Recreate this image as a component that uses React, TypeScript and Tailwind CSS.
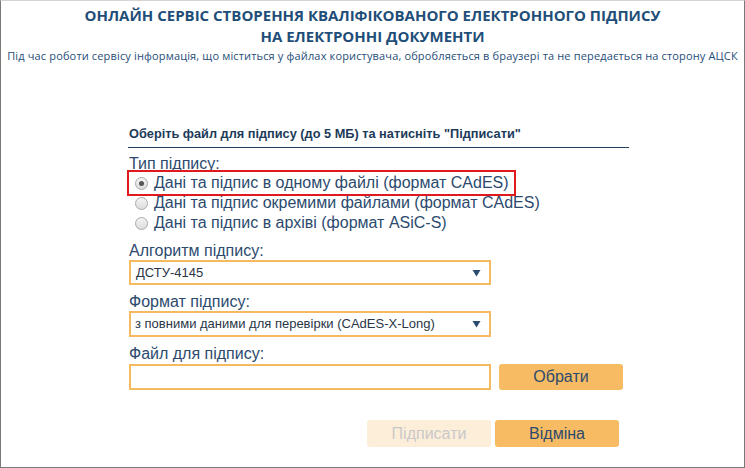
import React from "react";

const Radio = ({ checked }: { checked?: boolean }) => (
  <span className="w-[13px] h-[13px] rounded-full border border-[#a9a9a9] bg-gradient-to-b from-[#f4f4f4] to-[#dcdcdc] flex items-center justify-center shrink-0">
    {checked && <span className="w-[5px] h-[5px] rounded-full bg-[#555]" />}
  </span>
);

const Arrow = () => (
  <svg width="9" height="8" viewBox="0 0 9 8" className="absolute right-[8px] top-1/2 -translate-y-1/2">
    <path d="M0.5 1 L8.5 1 L4.5 7.5 Z" fill="#2b4c70" />
  </svg>
);

export default function App() {
  return (
    <div className="w-[745px] h-[468px] bg-white border border-[#7a7a7a] border-t-[#d4d4d4] relative overflow-hidden [font-family:'Liberation_Sans',Arial,sans-serif]">
      <div className="pt-[4px] text-center [font-family:'Open_Sans',sans-serif] font-bold text-[15px] leading-[21px] text-[#1f4e79]">
        <div>ОНЛАЙН СЕРВІС СТВОРЕННЯ КВАЛІФІКОВАНОГО ЕЛЕКТРОННОГО ПІДПИСУ</div>
        <div>НА ЕЛЕКТРОННІ ДОКУМЕНТИ</div>
      </div>
      <div className="text-center whitespace-nowrap [font-family:'Open_Sans',sans-serif] text-[11px] leading-[17px] text-[#1f4e79] tracking-[0.15px]">
        Під час роботи сервісу інформація, що міститься у файлах користувача, обробляється в браузері та не передається на сторону АЦСК
      </div>

      <div className="ml-[127px] w-[501px] mt-[63px] text-[#2c4a6e]">
        <div className="pl-[1px] text-[12.75px] leading-[14px] font-bold text-[#1c3b5a] pb-[6px] border-b border-[#23405e]">
          Оберіть файл для підпису (до 5 МБ) та натисніть "Підписати"
        </div>

        <div className="pl-[1px] mt-[7px] text-[16px] leading-[18px]">Тип підпису:</div>
        <div className="flex flex-col text-[16px] leading-[20px]">
          <div className="flex items-center h-[20px] pl-[7px] gap-[6px] relative">
            <Radio checked />
            <span>Дані та підпис в одному файлі (формат CAdES)</span>
            <div className="absolute left-[-1px] top-[-3px] w-[389px] h-[26px] border-[2px] border-[#e0191e]" />
          </div>
          <div className="flex items-center h-[20px] pl-[7px] gap-[6px]">
            <Radio />
            <span>Дані та підпис окремими файлами (формат CAdES)</span>
          </div>
          <div className="flex items-center h-[20px] pl-[7px] gap-[6px]">
            <Radio />
            <span>Дані та підпис в архіві (формат ASiC-S)</span>
          </div>
        </div>

        <div className="pl-[1px] mt-[9px] text-[16px] leading-[18px]">Алгоритм підпису:</div>
        <div className="ml-[1px] relative w-[362px] h-[25px] border-[2px] border-[#f5b95f] flex items-center pl-[5px] text-[13px] text-[#2a3646]">
          ДСТУ-4145
          <Arrow />
        </div>

        <div className="pl-[1px] mt-[8px] text-[16px] leading-[18px]">Формат підпису:</div>
        <div className="ml-[1px] relative w-[362px] h-[26px] border-[2px] border-[#f5b95f] flex items-center pl-[4px] text-[13px] text-[#2a3646]">
          з повними даними для перевірки (CAdES-X-Long)
          <Arrow />
        </div>

        <div className="pl-[1px] mt-[8px] text-[16px] leading-[18px]">Файл для підпису:</div>
        <div className="ml-[1px] mt-[1px] flex gap-[8px]">
          <div className="w-[362px] h-[26px] border-[2px] border-[#f5b95f]" />
          <button className="w-[124px] h-[26px] rounded-[3px] bg-[#f6bb63] text-[16px] text-[#2c4a6e] flex items-center justify-center">
            Обрати
          </button>
        </div>

        <div className="ml-[239px] mt-[30px] flex gap-[4px]">
          <button className="w-[124px] h-[27px] rounded-[3px] bg-[#fdeed9] text-[16px] text-[#c9c9c9] flex items-center justify-center">
            Підписати
          </button>
          <button className="w-[124px] h-[27px] rounded-[3px] bg-[#f6bb63] text-[16px] text-[#2c4a6e] flex items-center justify-center">
            Відміна
          </button>
        </div>
      </div>
    </div>
  );
}
